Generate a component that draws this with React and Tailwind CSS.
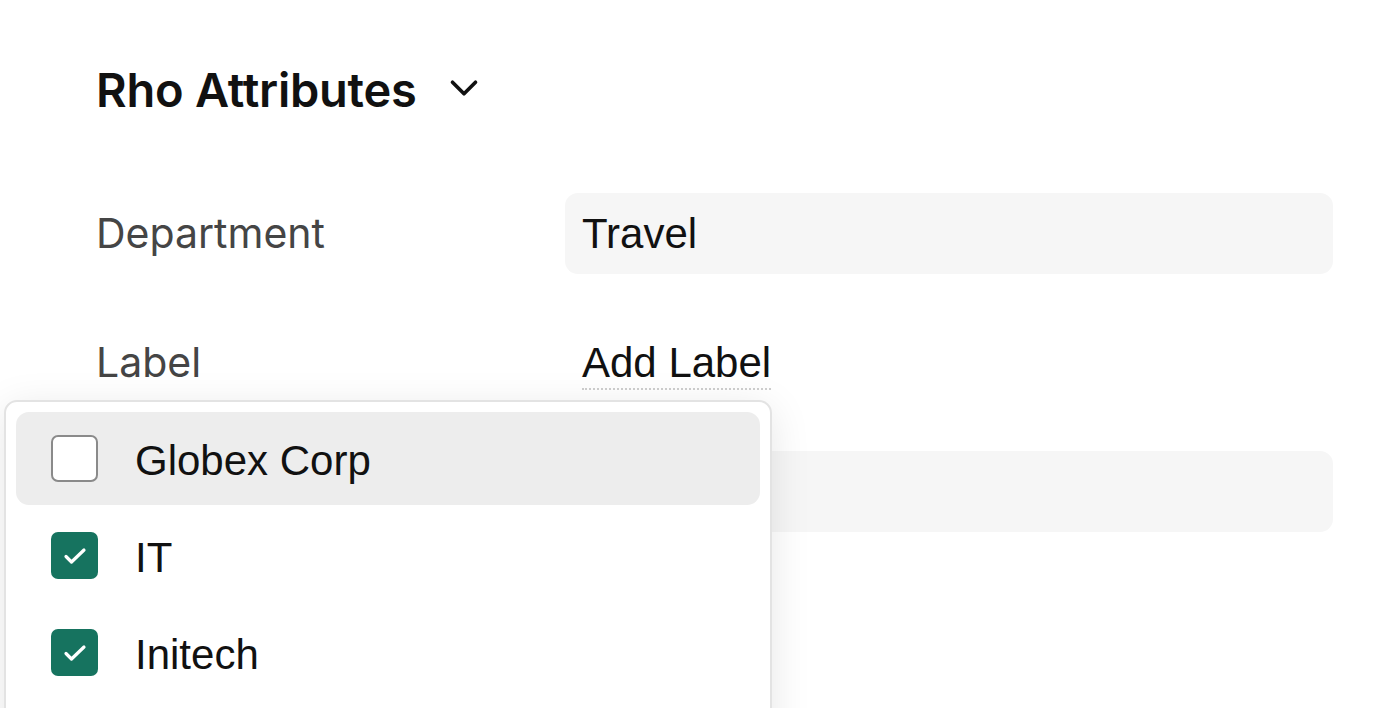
import { ChevronDown } from 'lucide-react'

const options = [
  { name: 'Globex Corp', checked: false, active: true },
  { name: 'IT', checked: true },
  { name: 'Initech', checked: true },
]

function Checkbox({ checked }) {
  if (checked) {
    return (
      <span className="flex h-[47px] w-[47px] shrink-0 items-center justify-center rounded-[7px] bg-[#16735f]">
        <svg width="26" height="20" viewBox="0 0 26 20" fill="none">
          <path d="M4 10.5l5.5 5.5L22 4" stroke="white" strokeWidth="3.2" strokeLinecap="round" strokeLinejoin="round" />
        </svg>
      </span>
    )
  }
  return <span className="h-[47px] w-[47px] shrink-0 rounded-[7px] border-2 border-[#8a8a8a] bg-white" />
}

export default function App() {
  return (
    <div className="relative h-[708px] w-[1400px] overflow-hidden bg-white">
      <div className="pl-[96px] pr-[67px] pt-[62px]">
        <div className="flex h-[56px] items-center gap-[24px]">
          <h2 className="font-['Inter',sans-serif] text-[47px] font-semibold tracking-[-0.005em] text-[#111]">
            Rho Attributes
          </h2>
          <ChevronDown size={46} strokeWidth={1.9} className="-mt-[4px] text-[#111]" />
        </div>

        <div className="mt-[75px] flex flex-col gap-[48px]">
          <div className="flex h-[81px] items-center">
            <div className="w-[469px] font-['Inter',sans-serif] text-[41px] text-[#454545]">Department</div>
            <div className="flex h-full flex-1 items-center rounded-[13px] bg-[#f6f6f6] pl-[17px] font-['Liberation_Sans',sans-serif] text-[42px] text-[#111]">
              Travel
            </div>
          </div>
          <div className="flex h-[81px] items-center">
            <div className="w-[469px] font-['Inter',sans-serif] text-[41px] text-[#454545]">Label</div>
            <div className="pl-[17px]">
              <span className="border-b-2 border-dotted border-[#cfcfcf] pb-[2px] font-['Liberation_Sans',sans-serif] text-[42px] leading-[44px] text-[#111]">
                Add Label
              </span>
            </div>
          </div>
          <div className="flex h-[81px] items-center">
            <div className="w-[469px]" />
            <div className="h-full flex-1 rounded-[13px] bg-[#f6f6f6]" />
          </div>
        </div>
      </div>

      <div className="absolute left-[4px] top-[400px] h-[360px] w-[768px] rounded-[13px] border-2 border-[#e3e3e3] bg-white p-[10px] shadow-[0_8px_40px_rgba(0,0,0,0.10)]">
        <ul className="flex flex-col gap-[4px]">
          {options.map((opt) => (
            <li
              key={opt.name}
              className={`flex h-[93px] items-center gap-[37px] rounded-[13px] pl-[35px] ${opt.active ? 'bg-[#ededed]' : ''}`}
            >
              <Checkbox checked={opt.checked} />
              <span className="mt-[3px] font-['Liberation_Sans',sans-serif] text-[42px] text-[#111]">{opt.name}</span>
            </li>
          ))}
        </ul>
      </div>
    </div>
  )
}
